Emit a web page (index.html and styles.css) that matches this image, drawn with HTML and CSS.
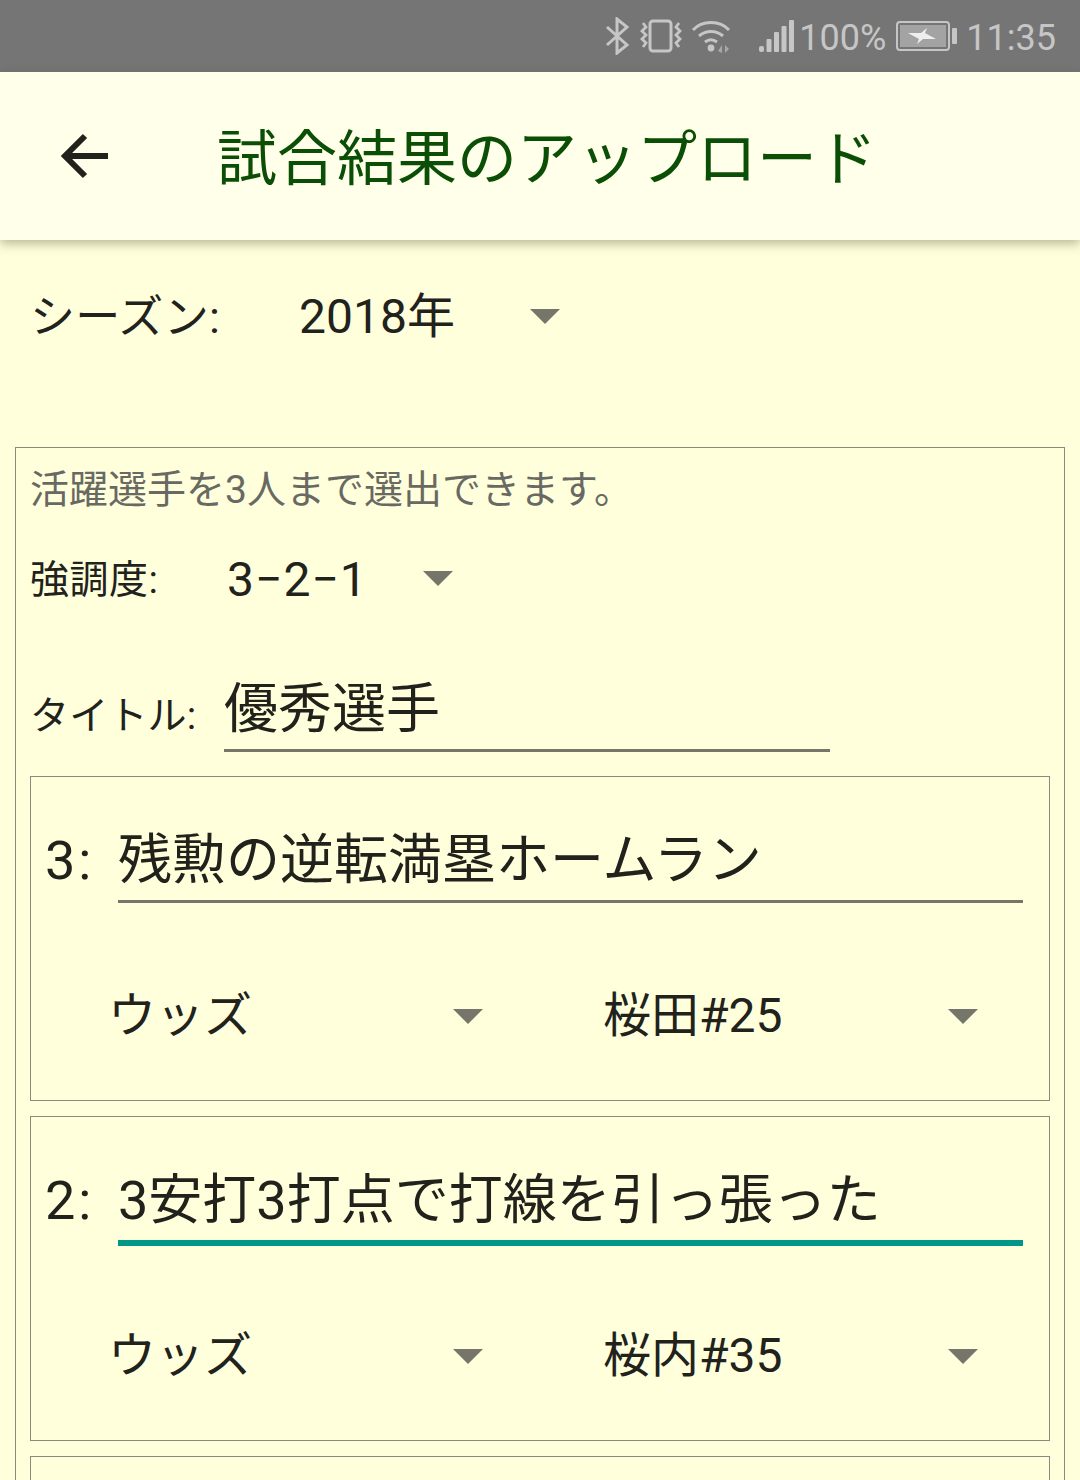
FILE: index.html
```html
<!DOCTYPE html>
<html lang="ja">
<head>
<meta charset="utf-8">
<title>試合結果のアップロード</title>
<link rel="stylesheet" href="styles.css">
</head>
<body>
<div class="screen">
  <header class="statusbar">
    <svg class="si bt" viewBox="0 0 24 38"><path d="M2 10l20 18-10 8V2l10 8L2 28" fill="none" stroke="#c6c6c6" stroke-width="3"/></svg>
    <svg class="si vib" viewBox="0 0 44 34"><rect x="11" y="2" width="21" height="30" rx="3" fill="none" stroke="#c6c6c6" stroke-width="3"/><path d="M4 4l3 4-4 4 4 4-4 4 4 4-3 4M40 4l-3 4 4 4-4 4 4 4-4 4 3 4" fill="none" stroke="#c6c6c6" stroke-width="2.8"/></svg>
    <svg class="si wifi" viewBox="0 0 40 34"><path d="M2 11C11 1 29 1 38 11M8 17c7-6 17-6 24 0M14 23c4-3 8-3 12 0" fill="none" stroke="#c6c6c6" stroke-width="3"/><circle cx="20" cy="29" r="3.4" fill="#c6c6c6"/><path d="M31 26v8l-4-2zM34 26v8l4-4z" fill="#a8a8a8"/></svg>
    <svg class="si sig" viewBox="0 0 36 34"><g fill="#c6c6c6"><rect x="0" y="27" width="5" height="6" rx="2"/><rect x="7.500" y="20" width="5" height="13" rx="1"/><rect x="15" y="13" width="5" height="20" rx="1"/><rect x="22.500" y="7" width="5" height="26" rx="1"/><rect x="30" y="1" width="5" height="32" rx="1"/></g></svg>
    <span class="pct">100%</span>
    <svg class="si bat" viewBox="0 0 62 30"><rect x="1" y="1" width="52" height="28" rx="3" fill="none" stroke="#c6c6c6" stroke-width="2"/><rect x="4" y="4" width="46" height="22" fill="#a3a3a3"/><rect x="56" y="7" width="5" height="16" rx="1" fill="#c6c6c6"/><path d="M12 12h13l6-5-2 5 11 6H27l-6 5 2-5z" fill="#eeeeee"/></svg>
    <span class="time">11:35</span>
  </header>

  <div class="appbar">
    <svg class="back" viewBox="0 0 49 48"><path d="M48 24H5M25 4 5 24l20 20" fill="none" stroke="#22221c" stroke-width="6"/></svg>
    <h1 class="title">試合結果のアップロード</h1>
  </div>

  <main class="content">
    <div class="season">
      <span class="season-label">シーズン:</span>
      <span class="select season-select"><span class="val">2018年</span><i class="caret"></i></span>
    </div>

    <section class="panel">
      <p class="hint">活躍選手を3人まで選出できます。</p>
      <div class="emph">
        <span class="emph-label">強調度:</span>
        <span class="select emph-select"><span class="emph-val">3−2−1</span><i class="caret"></i></span>
      </div>
      <div class="title-row">
        <span class="title-label">タイトル:</span>
        <span class="title-input">優秀選手</span>
      </div>

      <div class="card">
        <div class="comment"><span class="rank">3:</span><span class="input">残勲の逆転満塁ホームラン</span></div>
        <div class="picks">
          <span class="select pick"><span class="val">ウッズ</span><i class="caret"></i></span>
          <span class="select pick"><span class="val">桜田#25</span><i class="caret"></i></span>
        </div>
      </div>

      <div class="card">
        <div class="comment"><span class="rank">2:</span><span class="input focus">3安打3打点で打線を引っ張った</span></div>
        <div class="picks">
          <span class="select pick"><span class="val">ウッズ</span><i class="caret"></i></span>
          <span class="select pick"><span class="val">桜内#35</span><i class="caret"></i></span>
        </div>
      </div>

      <div class="card"></div>
    </section>
  </main>
</div>
</body>
</html>
```
FILE: styles.css
```css
* { box-sizing: border-box; }
html, body { margin: 0; padding: 0; }
body {
  font-family: Roboto, "Noto Sans CJK JP", sans-serif;
  color: #22221c;
  background: #ffffdc;
}
.screen { width: 1080px; height: 1480px; overflow: hidden; display: flex; flex-direction: column; }

.statusbar {
  height: 72px; flex: none; background: #757575; color: #c6c6c6;
  display: flex; align-items: center; padding-right: 24px; justify-content: flex-end;
}
.si { display: block; flex: none; }
.bt { width: 24px; height: 38px; margin-right: 10px; }
.vib { width: 44px; height: 34px; margin-right: 8px; }
.wifi { width: 40px; height: 34px; margin-right: 28px; }
.sig { width: 36px; height: 34px; margin-right: 4px; }
.bat { width: 62px; height: 30px; margin: 0 8px 0 10px; }
.pct, .time { font-size: 36px; line-height: 72px; padding-top: 4px; }

.appbar {
  height: 168px; flex: none; background: #ffffea;
  display: flex; align-items: center; padding-left: 60px;
  box-shadow: 0 4px 10px rgba(60,60,30,.35);
  position: relative;
}
.back { width: 49px; height: 48px; flex: none; }
.title { margin: 8px 0 0 108px; font-size: 60px; font-weight: 400; color: #0b4f06; line-height: 1; }

.content { flex: 1; padding: 0 15px; }

.season { display: flex; align-items: center; height: 152px; padding: 0 0 0 15px; }
.season-label { font-size: 45px; width: 269px; line-height: 64px; margin-top: 4px; letter-spacing: .3px; }
.select { display: flex; align-items: center; justify-content: space-between; }
.val { font-size: 48px; line-height: 64px; padding-top: 1px; }
.season-select { width: 261px; }
.caret {
  display: block; width: 0; height: 0; flex: none;
  border-left: 15px solid transparent; border-right: 15px solid transparent; border-top: 15px solid #75756a;
}

.panel {
  margin-top: 55px; border: 1px solid #8a8a80; padding: 0 14px;
}
.hint { margin: 0; font-size: 39px; line-height: 84px; color: #696963; }
.emph { display: flex; align-items: center; height: 88px; margin-top: 2px; }
.emph-label { font-size: 39px; width: 197px; margin-bottom: 4px; letter-spacing: .5px; }
.emph-val { font-size: 48px; letter-spacing: 1px; padding-top: 2px; }
.emph-select { width: 226px; }

.title-row { display: flex; align-items: flex-end; margin-top: 30px; height: 100px; }
.title-label { font-size: 39px; width: 194px; line-height: 72px; letter-spacing: .2px; }
.title-input { font-size: 54px; width: 606px; line-height: 82px; height: 83px; border-bottom: 3px solid #75756a; }

.card {
  margin-top: 24px; height: 325px; border: 1px solid #8a8a80;
  padding: 0 26px 0 14px;
}
.card + .card { margin-top: 15px; }
.comment { display: flex; align-items: flex-end; height: 126px; }
.rank { font-size: 54px; width: 73px; line-height: 84px; letter-spacing: 3px; }
.input { flex: 1; font-size: 54px; line-height: 82px; height: 83px; border-bottom: 3px solid #75756a; white-space: nowrap; }
.input.focus { height: 86px; border-bottom: 6px solid #009688; margin-bottom: -3px; }
.picks { display: flex; margin-top: 81px; padding-left: 63px; }
.pick { width: 375px; margin-right: 120px; }
.pick .val { padding-top: 0; margin-bottom: 1px; }
.pick:last-child { margin-right: 0; }
```
